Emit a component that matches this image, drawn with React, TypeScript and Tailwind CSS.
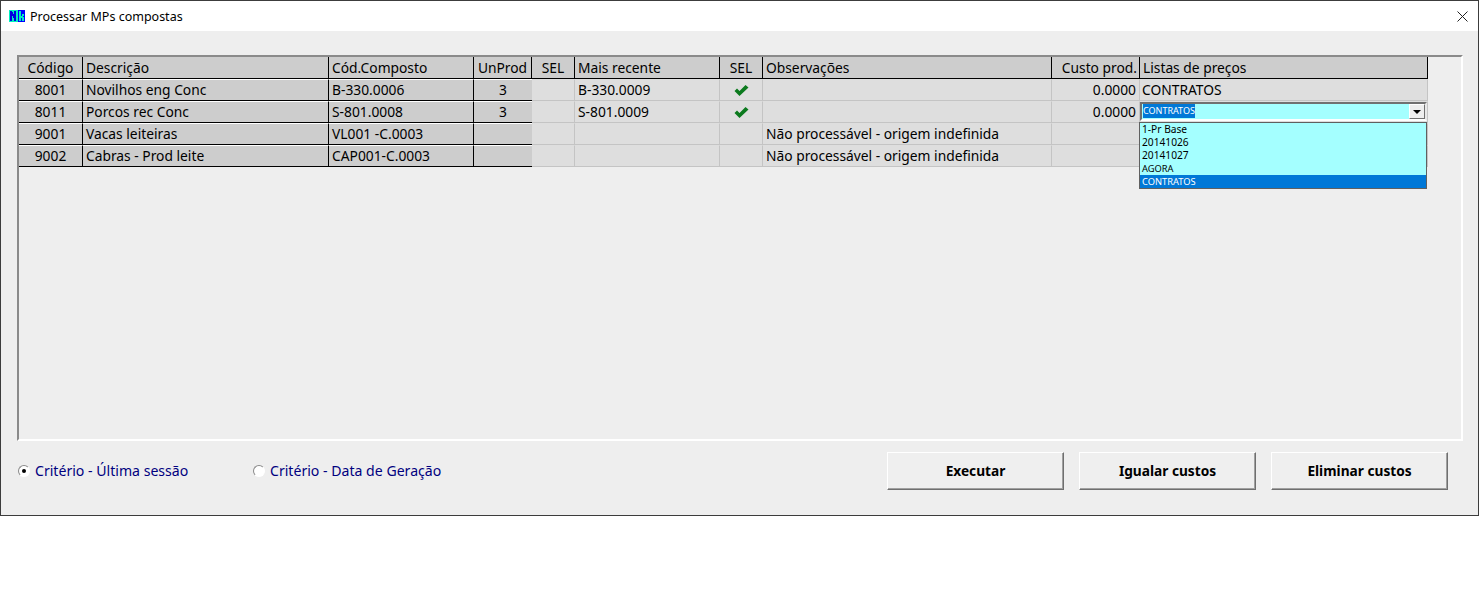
import React from "react";

const cols = "grid-cols-[64px_246px_145px_58px_43px_145px_43px_289px_88px_288px]";
const fixed = "h-[22px] bg-[#cdcdcd] border-b border-r border-black border-t-white border-t flex items-center pt-px";
const data = "h-[22px] bg-[#dedede] border-b border-r border-t border-[#c4c4c4] border-t-[#dedede] flex items-center pt-px";

function Check() {
  return (
    <svg width="15" height="11" viewBox="0 0 15 11">
      <path d="M0.5 6 L3 3.5 L5.5 6 L11.5 0 L14.5 2.5 L5.5 11 Z" fill="#0c7a1e" />
    </svg>
  );
}

function Row({ c, d, e, u, m, ok, obs, cost, list }: { c: string; d: string; e: string; u?: string; m?: string; ok?: boolean; obs?: string; cost?: string; list?: string }) {
  return (
    <>
      <div className={`${fixed} justify-center`}>{c}</div>
      <div className={`${fixed} pl-[3px]`}>{d}</div>
      <div className={`${fixed} pl-[3px]`}>{e}</div>
      <div className={`${fixed} justify-center border-r-0`}>{u}</div>
      <div className={data}></div>
      <div className={`${data} pl-[3px]`}>{m}</div>
      <div className={`${data} justify-center`}>{ok && <Check />}</div>
      <div className={`${data} pl-[3px]`}>{obs}</div>
      <div className={`${data} justify-end pr-[3px]`}>{cost}</div>
      <div className={`${data} pl-[2px]`}>{list}</div>
    </>
  );
}

function Head({ t, left, right }: { t: string; left?: boolean; right?: boolean }) {
  return <div className={`${fixed} ${left ? "pl-[3px]" : right ? "justify-end pr-[2px]" : "justify-center"} !border-t-0 !pt-[2px]`}>{t}</div>;
}

function Radio({ on, label, cls }: { on?: boolean; label: string; cls: string }) {
  return (
    <div className={`flex items-center gap-[5px] ${cls}`}>
      <span className="flex h-[12px] w-[12px] items-center justify-center rounded-full border border-[#8a8a8a] border-r-white border-b-white bg-white">
        {on && <span className="h-[4px] w-[4px] rounded-full bg-black" />}
      </span>
      <span className="text-[14.1px] text-[#000080]">{label}</span>
    </div>
  );
}

function Btn({ t }: { t: string }) {
  return (
    <button className="h-[38px] w-[177px] border border-t-white border-l-white border-r-[#6f6f6f] border-b-[#6f6f6f] bg-[#efefef] text-[13.7px] font-bold text-black shadow-[inset_-1px_-1px_0_#a0a0a0]">
      {t}
    </button>
  );
}

export default function App() {
  return (
    <div className="h-[600px] bg-white font-['Noto_Sans','Open_Sans',sans-serif] text-[13.8px] text-black">
      <div className="flex h-[516px] flex-col border border-[#3c3c3c] bg-[#eeeeee]">
        <div className="flex h-[30px] shrink-0 items-center bg-white pl-[8px] pr-[10px]">
          <svg width="16" height="12" viewBox="0 0 16 12" shapeRendering="crispEdges" className="mb-[1px]">
            <rect width="16" height="12" fill="#0000ff" />
            <rect width="9" height="12" fill="#00f0c0" />
            <path d="M1 1h2v1h1v2h1V1h2v10H5V8H4V6H3v5H1z" fill="#0000e0" />
            <path d="M10 1h2v5h1V4h2v2h-1v1h1v4h-2V8h-1v3h-2z" fill="#00f0c0" />
          </svg>
          <span className="ml-[5px] mt-[2px] text-[12.5px] text-black">Processar MPs compostas</span>
          <svg className="ml-auto" width="11" height="11" viewBox="0 0 11 11">
            <path d="M0.5 0.5 L10.5 10.5 M10.5 0.5 L0.5 10.5" stroke="#222" strokeWidth="1" />
          </svg>
        </div>
        <div className="flex flex-1 flex-col pl-[16px] pr-[15px] pt-[24px]">
          <div className="relative h-[386px] border-2 border-t-[#8a8a8a] border-l-[#8a8a8a] border-b-white border-r-white">
            <div className={`grid w-[1409px] ${cols}`}>
              <Head t="Código" />
              <Head t="Descrição" left />
              <Head t="Cód.Composto" left />
              <Head t="UnProd" />
              <Head t="SEL" />
              <Head t="Mais recente" left />
              <Head t="SEL" />
              <Head t="Observações" left />
              <Head t="Custo prod." right />
              <Head t="Listas de preços" left />
              <Row c="8001" d="Novilhos eng Conc" e="B-330.0006" u="3" m="B-330.0009" ok cost="0.0000" list="CONTRATOS" />
              <Row c="8011" d="Porcos rec Conc" e="S-801.0008" u="3" m="S-801.0009" ok cost="0.0000" />
              <Row c="9001" d="Vacas leiteiras" e="VL001 -C.0003" obs="Não processável - origem indefinida" />
              <Row c="9002" d="Cabras - Prod leite" e="CAP001-C.0003" obs="Não processável - origem indefinida" />
            </div>
            <div className="absolute left-[1121px] top-[45px] flex h-[19px] w-[287px] items-center border-2 border-t-[#707070] border-l-[#707070] border-r-[#e8e8e8] border-b-[#ffffff] bg-[#a4ffff] pl-px text-[9px]">
              <span className="mb-[2px] bg-[#0078d7] leading-[14px] text-white">CONTRATOS</span>
              <span className="ml-auto flex h-[15px] w-[16px] items-center justify-center border border-t-white border-l-white border-r-[#707070] border-b-[#707070] bg-[#eeeeee]">
                <span className="h-0 w-0 border-x-[4px] border-t-[4px] border-x-transparent border-t-black" />
              </span>
            </div>
            <div className="absolute left-[1120px] top-[65px] w-[288px] border border-[#606060] bg-[#a4ffff] text-[10.2px] text-black">
              <div className="flex h-[13px] items-center pl-[2px]">1-Pr Base</div>
              <div className="flex h-[13px] items-center pl-[2px]">20141026</div>
              <div className="flex h-[13px] items-center pl-[2px]">20141027</div>
              <div className="flex h-[13px] items-center pl-[2px] text-[9.3px]">AGORA</div>
              <div className="flex h-[13px] items-center bg-[#0078d7] pl-[2px] text-[9.3px] text-white">CONTRATOS</div>
            </div>
          </div>
          <div className="flex flex-1 items-start justify-between pt-[11px]">
            <div className="flex items-center pt-[8px]">
              <Radio on label="Critério - Última sessão" cls="ml-[1px] w-[235px]" />
              <Radio label="Critério - Data de Geração" cls="" />
            </div>
            <div className="mr-[15px] flex gap-[15px]">
              <Btn t="Executar" />
              <Btn t="Igualar custos" />
              <Btn t="Eliminar custos" />
            </div>
          </div>
        </div>
      </div>
    </div>
  );
}
